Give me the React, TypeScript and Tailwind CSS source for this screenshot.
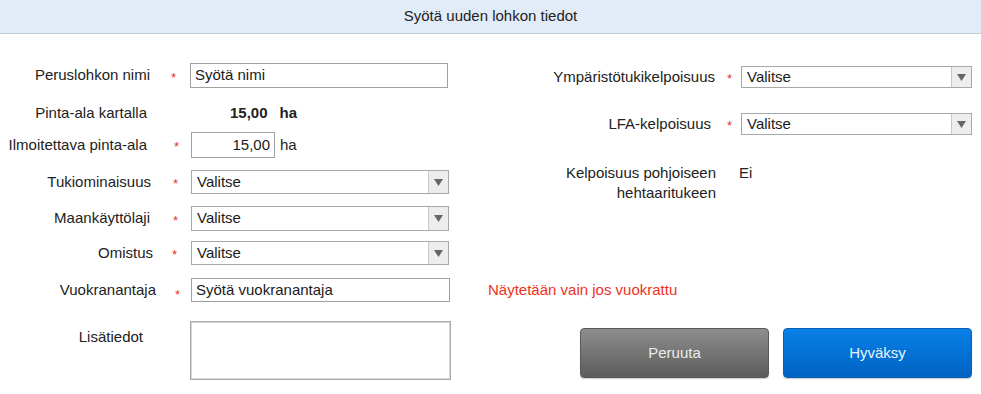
import React from 'react';

const Star = () => (
  <span className="text-[#e8341c] text-[13px] leading-none pt-[3px]">*</span>
);

const Caret = () => (
  <svg width="9" height="7" viewBox="0 0 9 7">
    <path d="M0 0 H9 L4.5 7 Z" fill="#666" />
  </svg>
);

const Select: React.FC<{ w: string; h: string }> = ({ w, h }) => (
  <div className={`${w} ${h} flex border border-[#a8a8a8] bg-white`}>
    <span className="flex-1 pl-[5px] flex items-center text-[#1a1a1a]">Valitse</span>
    <span className="w-[20px] flex items-center justify-center bg-[#ededed] border-l border-[#c8c8c8]">
      <Caret />
    </span>
  </div>
);

const TextInput: React.FC<{ w: string; h: string; value: string; right?: boolean }> = ({ w, h, value, right }) => (
  <div
    className={`${w} ${h} flex items-center border border-[#a0a0a0] bg-white text-[#1a1a1a] ${
      right ? 'justify-end pr-[4px]' : 'pl-[4px]'
    }`}
  >
    {value}
  </div>
);

export default function App() {
  return (
    <div className="w-[981px] h-[394px] bg-white text-[15px] text-[#222] overflow-hidden" style={{ fontFamily: '"Liberation Sans", Arial, sans-serif' }}>
      {/* Header */}
      <div className="h-[34px] bg-[#e2ecf8] border-b border-[#c3cbd6] flex items-center justify-center text-[#222]">
        Syötä uuden lohkon tiedot
      </div>

      <div className="flex">
        {/* Left column */}
        <div className="w-[488px] pt-[29px] flex flex-col">
          <div className="h-[25px] flex items-center">
            <span className="w-[150px] text-right">Peruslohkon nimi</span>
            <span className="w-[40px] pl-[21px] flex"><Star /></span>
            <TextInput w="w-[258px]" h="h-[25px]" value="Syötä nimi" />
          </div>

          <div className="mt-[13px] h-[25px] flex items-center">
            <span className="w-[147px] text-right">Pinta-ala kartalla</span>
            <span className="ml-[83px] font-bold">15,00</span>
            <span className="ml-[12px] font-bold">ha</span>
          </div>

          <div className="mt-[6px] h-[26px] flex items-center">
            <span className="w-[147px] text-right">Ilmoitettava pinta-ala</span>
            <span className="w-[44px] pl-[27px] flex"><Star /></span>
            <TextInput w="w-[84px]" h="h-[26px]" value="15,00" right />
            <span className="ml-[5px]">ha</span>
          </div>

          <div className="mt-[12px] h-[24px] flex items-center">
            <span className="w-[151px] text-right">Tukiominaisuus</span>
            <span className="w-[40px] pl-[22px] flex"><Star /></span>
            <Select w="w-[258px]" h="h-[24px]" />
          </div>

          <div className="mt-[12px] h-[25px] flex items-center">
            <span className="w-[150px] text-right">Maankäyttölaji</span>
            <span className="w-[41px] pl-[23px] flex"><Star /></span>
            <Select w="w-[258px]" h="h-[25px]" />
          </div>

          <div className="mt-[10px] h-[24px] flex items-center">
            <span className="w-[153px] text-right">Omistus</span>
            <span className="w-[38px] pl-[19px] flex"><Star /></span>
            <Select w="w-[258px]" h="h-[24px]" />
          </div>

          <div className="mt-[13px] h-[24px] flex items-center">
            <span className="w-[156px] text-right">Vuokranantaja</span>
            <span className="w-[35px] pl-[19px] flex pt-[5px]"><Star /></span>
            <TextInput w="w-[259px]" h="h-[24px]" value="Syötä vuokranantaja" />
          </div>

          <div className="mt-[19px] flex items-start">
            <span className="w-[143px] text-right pt-[5px]">Lisätiedot</span>
            <div className="ml-[47px] w-[261px] h-[59px] border border-[#a8a8a8] shadow-[inset_0_0_0_1px_#d8d8d8] bg-white" />
          </div>
        </div>

        {/* Right column */}
        <div className="w-[485px] pt-[32px] flex flex-col">
          <div className="h-[22px] flex items-center">
            <span className="w-[227px] text-right">Ympäristötukikelpoisuus</span>
            <span className="w-[26px] pl-[12px] flex"><Star /></span>
            <Select w="w-[231px]" h="h-[22px]" />
          </div>

          <div className="mt-[25px] h-[22px] flex items-center">
            <span className="w-[223px] text-right">LFA-kelpoisuus</span>
            <span className="w-[30px] pl-[16px] flex"><Star /></span>
            <Select w="w-[231px]" h="h-[22px]" />
          </div>

          <div className="mt-[28px] flex items-start leading-[20px]">
            <span className="w-[228px] text-right">
              Kelpoisuus pohjoiseen
              <br />
              hehtaaritukeen
            </span>
            <span className="ml-[23px]">Ei</span>
          </div>

          <div className="mt-[77px] leading-[20px] text-[#f0321c]">Näytetään vain jos vuokrattu</div>

          <div className="mt-[28px] flex gap-[14px] pl-[92px]">
            <button className="w-[189px] h-[50px] rounded-[4px] bg-gradient-to-b from-[#8e8e8e] to-[#5c5c5c] border border-[#5a5a5a] text-[#ececec] text-[15px] shadow-[0_1px_1px_rgba(0,0,0,0.2)]">
              Peruuta
            </button>
            <button className="w-[189px] h-[50px] rounded-[4px] bg-gradient-to-b from-[#0a80e8] to-[#0063c2] border border-[#0a5fb0] text-[#eaf3ff] text-[15px] shadow-[0_1px_1px_rgba(0,0,0,0.2)]">
              Hyväksy
            </button>
          </div>
        </div>
      </div>
    </div>
  );
}
